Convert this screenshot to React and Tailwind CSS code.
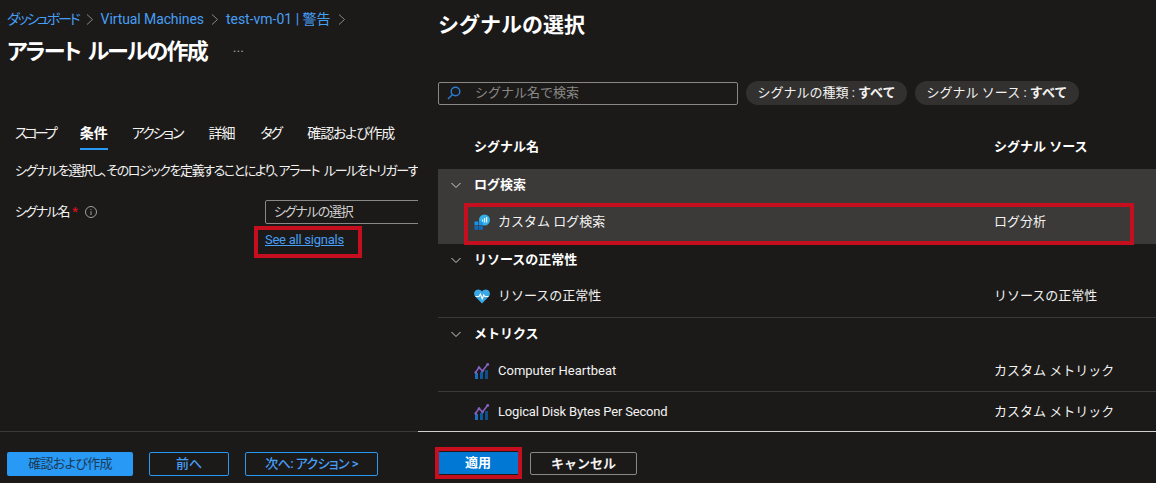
import React from "react";

const font = { fontFamily: 'Roboto, "Noto Sans CJK JP", "Noto Sans", sans-serif' };

function Chevron() {
  return (
    <svg width="10" height="10" viewBox="0 0 10 10" className="shrink-0" fill="none" stroke="#d2d0ce" strokeWidth="1">
      <path d="M0.5 3 L5 7.5 L9.5 3" />
    </svg>
  );
}

function Crumb() {
  return (
    <svg width="8" height="11" viewBox="0 0 8 11" fill="none" stroke="#8a8886" strokeWidth="1" className="shrink-0">
      <path d="M1 0.5 L6.5 5.5 L1 10.5" />
    </svg>
  );
}

function LogIcon() {
  return (
    <svg width="16" height="16" viewBox="0 0 16 16" className="shrink-0">
      <circle cx="10.5" cy="6" r="5.5" fill="#32b0e7" />
      <rect x="8" y="5.5" width="1.2" height="3" fill="#dff6ff" />
      <rect x="10" y="4" width="1.2" height="4.5" fill="#dff6ff" />
      <rect x="12" y="3" width="1.2" height="5.5" fill="#dff6ff" />
      <rect x="0.5" y="7.5" width="3.8" height="3.8" fill="#1b93eb" />
      <rect x="5" y="7.5" width="3.8" height="3.8" fill="#1b93eb" />
      <rect x="0.5" y="12" width="3.8" height="3.8" fill="#0f6cbd" />
      <rect x="5" y="12" width="3.8" height="3.8" fill="#0f6cbd" />
    </svg>
  );
}

function HeartIcon() {
  return (
    <svg width="16" height="15" viewBox="0 0 16 15" className="shrink-0">
      <path d="M8 14.5 L1.2 7.6 C-0.6 5.5 0 2.2 2.2 1 C4.2 -0.1 6.6 0.5 8 2.4 C9.4 0.5 11.8 -0.1 13.8 1 C16 2.2 16.6 5.5 14.8 7.6 Z" fill="#3ba8e6" />
      <path d="M1.5 7.5 H5 L6.4 5 L8.2 9.8 L9.8 6 L10.8 7.5 H14.5" fill="none" stroke="#ffffff" strokeWidth="1.1" />
    </svg>
  );
}

function MetricIcon() {
  return (
    <svg width="16" height="16" viewBox="0 0 16 16" className="shrink-0">
      <rect x="1" y="10" width="3" height="6" fill="#1b6ec2" />
      <rect x="6" y="9" width="3" height="7" fill="#0f5a9e" />
      <rect x="11" y="7" width="3" height="9" fill="#0f4f86" />
      <path d="M1.5 9.5 L5 4.5 L8.5 8 L13.5 1.5" fill="none" stroke="#8661c5" strokeWidth="1.6" />
      <circle cx="1.7" cy="9.5" r="1.3" fill="#8661c5" />
      <circle cx="5" cy="4.5" r="1.3" fill="#8661c5" />
      <circle cx="8.5" cy="8" r="1.3" fill="#8661c5" />
      <circle cx="13.7" cy="1.5" r="1.4" fill="#8661c5" />
    </svg>
  );
}

function GroupRow({ label, active, height }) {
  return (
    <div className={`flex items-center pl-[13px] ${height} ${active ? "bg-[#3b3a39]" : ""}`}>
      <Chevron />
      <span className="ml-[13px] text-[13px] font-bold text-white">{label}</span>
    </div>
  );
}

function ItemRow({ icon, name, source, height, bordered, highlighted, nameClass = "" }) {
  return (
    <div
      className={`relative flex items-center ${height} ${bordered ? "border-b border-[#3b3a39]" : ""} ${highlighted ? "bg-[#3b3a39]" : ""}`}
    >
      {highlighted && (
        <div className="absolute left-[26px] top-[1px] h-[42px] w-[670px] border-4 border-[#c50f1f]" />
      )}
      <div className="ml-[36px] flex w-[520px] shrink-0 items-center gap-[8px]">
        {icon}
        <span className={`text-[13px] text-[#f3f2f1] ${nameClass}`}>{name}</span>
      </div>
      <span className="text-[13px] text-[#f3f2f1]">{source}</span>
    </div>
  );
}

export default function App() {
  return (
    <div style={font} className="flex h-[483px] w-[1156px] overflow-hidden bg-[#1b1a19]">
      {/* Left blade */}
      <div className="flex h-full w-[418px] shrink-0 flex-col overflow-hidden [font-feature-settings:'palt']">
        <div className="min-h-0 flex-1 overflow-hidden">
          <div className="flex items-center gap-[7px] pl-[7px] pt-[9px] text-[14px] leading-[20px] whitespace-nowrap text-[#479ef5]">
            <span className="tracking-[-2.2px]">ダッシュボード</span>
            <Crumb />
            <span className="tracking-[-0.1px]">Virtual Machines</span>
            <Crumb />
            <span>test-vm-01 | 警告</span>
            <Crumb />
          </div>
          <div className="mt-[6px] flex items-center pl-[7px]">
            <h1 className="text-[22px] font-bold leading-[34px] tracking-[-1.8px] [word-spacing:4px] whitespace-nowrap text-white">アラート ルールの作成</h1>
            <span className="ml-[26px] text-[14px] text-[#a19f9d]">···</span>
          </div>

          <div className="mt-[52px] flex gap-[25px] pl-[15px] text-[14px] leading-[24px] whitespace-nowrap text-[#f3f2f1]">
            <span className="h-[29px] tracking-[-3px]">スコープ</span>
            <span className="h-[29px] border-b-2 border-[#2899f5] font-bold text-white">条件</span>
            <span className="ml-[-1px] h-[29px] tracking-[-2px]">アクション</span>
            <span className="ml-[1px] h-[29px] tracking-[-1px]">詳細</span>
            <span className="ml-[1px] h-[29px] tracking-[-2.5px]">タグ</span>
            <span className="ml-[2px] h-[29px] tracking-[-1.2px]">確認および作成</span>
          </div>

          <p className="mt-[11px] pl-[15px] text-[13px] leading-[20px] tracking-[-1.4px] [word-spacing:3px] whitespace-nowrap text-[#f3f2f1]">
            シグナルを選択し、そのロジックを定義することにより、アラート ルールをトリガーするタイミングを
          </p>

          <div className="mt-[19px] flex pl-[15px]">
            <div className="flex h-[24px] w-[250px] shrink-0 items-center gap-[9px]">
              <span className="text-[13px] tracking-[-1.5px] whitespace-pre text-[#f3f2f1]">
                シグナル名  <span className="text-[#e81123]">*</span>
              </span>
              <svg width="12" height="12" viewBox="0 0 12 12" fill="none" stroke="#a19f9d">
                <circle cx="6" cy="6" r="5.5" />
                <path d="M6 5.2 V9" />
                <path d="M6 3 V4" />
              </svg>
            </div>
            <div className="relative shrink-0">
              <div className="flex h-[24px] w-[300px] items-center rounded-l-[2px] border border-[#8a8886] pl-[8px] text-[13px] tracking-[-1.2px] text-[#d2d0ce]">
                シグナルの選択
              </div>
              <div className="mt-[6px] text-[13px] leading-[20px] tracking-[-0.25px]">
                <a className="text-[#479ef5] underline">See all signals</a>
              </div>
              <div className="absolute left-[-11px] top-[26px] h-[32px] w-[108px] border-4 border-[#c50f1f]" />
            </div>
          </div>
        </div>

        <div className="flex h-[52px] shrink-0 items-start gap-[16px] border-t border-[#3b3a39] pl-[7px] pt-[20px] text-[13px]">
          <button className="h-[24px] w-[126px] rounded-[2px] bg-[#2899f5] tracking-[-0.7px] text-[#1b3a57]">確認および作成</button>
          <button className="h-[24px] w-[80px] rounded-[2px] border border-[#2899f5] font-medium text-[#479ef5]">前へ</button>
          <button className="h-[24px] w-[133px] rounded-[2px] border border-[#2899f5] font-medium tracking-[-0.6px] text-[#479ef5]">次へ: アクション &gt;</button>
        </div>
      </div>

      {/* Right blade */}
      <div className="flex h-full min-w-0 flex-1 flex-col overflow-hidden">
        <div className="min-h-0 flex-1 overflow-hidden">
          <h2 className="pl-[20px] pt-[9px] text-[21px] leading-[32px] font-bold text-white">シグナルの選択</h2>

          <div className="mt-[40px] flex items-center pl-[20px]">
            <div className="flex h-[23px] w-[300px] items-center rounded-[2px] border border-[#8a8886] pl-[8px]">
              <svg width="14" height="14" viewBox="0 0 14 14" fill="none" stroke="#2b7cd3" strokeWidth="1.4">
                <circle cx="8.5" cy="5.5" r="4.3" />
                <path d="M5.5 8.5 L1 13" />
              </svg>
              <span className="ml-[14px] text-[13px] text-[#8a8886]">シグナル名で検索</span>
            </div>
            <div className="ml-[8px] flex h-[24px] w-[161px] items-center justify-center rounded-full bg-[#323130] text-[13px] text-[#f3f2f1]">
              <span className="whitespace-pre">シグナルの種類 : <span className="font-bold">すべて</span></span>
            </div>
            <div className="ml-[8px] flex h-[24px] w-[164px] items-center justify-center rounded-full bg-[#323130] text-[13px] text-[#f3f2f1]">
              <span className="whitespace-pre">シグナル ソース : <span className="font-bold">すべて</span></span>
            </div>
          </div>

          <div className="mt-[24px] flex h-[40px] items-center pb-[5px] pl-[56px] text-[13px] font-bold text-white">
            <span className="w-[520px] shrink-0">シグナル名</span>
            <span>シグナル ソース</span>
          </div>

          <div className="ml-[20px]">
            <GroupRow label="ログ検索" active height="h-[33px] pb-[1px]" />
            <ItemRow icon={<LogIcon />} name="カスタム ログ検索" source="ログ分析" height="h-[42px] pb-[3px]" highlighted />
            <GroupRow label="リソースの正常性" height="h-[31px]" />
            <ItemRow icon={<HeartIcon />} name="リソースの正常性" source="リソースの正常性" height="h-[43px]" bordered />
            <GroupRow label="メトリクス" height="h-[32px]" />
            <ItemRow icon={<MetricIcon />} name="Computer Heartbeat" source="カスタム メトリック" height="h-[42px]" bordered />
            <ItemRow icon={<MetricIcon />} name="Logical Disk Bytes Per Second" source="カスタム メトリック" height="h-[40px]" nameClass="tracking-[-0.18px]" />
          </div>
        </div>

        <div className="flex h-[52px] shrink-0 items-start gap-[12px] border-t border-[#d2d0ce] pl-[20px] pt-[20px] text-[13px] font-bold">
          <div className="relative">
            <button className="block h-[22px] w-[80px] bg-[#0078d4] text-white">適用</button>
            <div className="absolute left-[-3px] top-[-5px] h-[32px] w-[87px] border-4 border-[#c50f1f]" />
          </div>
          <button className="h-[23px] w-[107px] rounded-[2px] border border-[#8a8886] text-[#f3f2f1]">キャンセル</button>
        </div>
      </div>
    </div>
  );
}
